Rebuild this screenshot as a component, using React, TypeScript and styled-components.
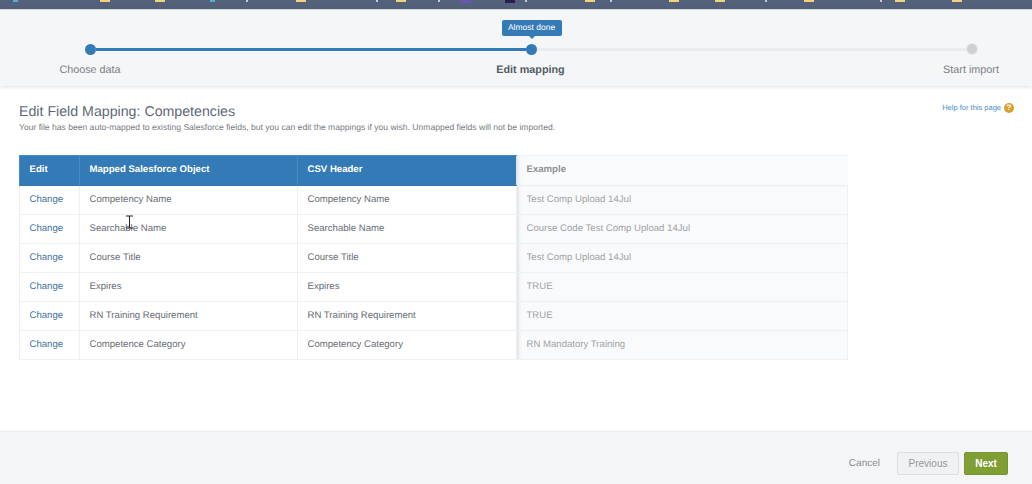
import styled, { createGlobalStyle } from "styled-components";

const GlobalStyle = createGlobalStyle`
  html, body {
    margin: 0;
    padding: 0;
    background: #fff;
    overflow: hidden;
  }
  body {
    font-family: "Liberation Sans", Arial, sans-serif;
    color: #5c6470;
    text-rendering: geometricPrecision;
  }
`;

const Page = styled.div`
  width: 1032px;
  height: 484px;
  display: flex;
  flex-direction: column;
  position: relative;
  overflow: hidden;
`;

/* browser bookmarks bar, only the bottom of the favicons is visible */
const BookmarkBar = styled.div`
  height: 9px;
  flex: none;
  background: #54617a;
  display: flex;
  align-items: flex-start;
`;

const Favicon = styled.span<{ $kind: string; $gap: number }>`
  flex: none;
  margin-left: ${({ $gap }) => $gap}px;
  width: ${({ $kind }) => ($kind === "white" ? 2 : $kind === "blue" ? 5 : 10)}px;
  height: ${({ $kind }) => ($kind === "purple" || $kind === "dark" ? 3 : 2)}px;
  background: ${({ $kind }) =>
    $kind === "folder"
      ? "#f3d27c"
      : $kind === "blue"
      ? "#4fb3d0"
      : $kind === "purple"
      ? "#6a55b5"
      : $kind === "dark"
      ? "#2c1d4f"
      : "#c5cad4"};
`;

const Stepper = styled.div`
  height: 77px;
  flex: none;
  box-sizing: border-box;
  background: #f4f6f8;
  border-top: 1px solid #d5d9de;
  box-shadow: 0 1px 4px rgba(0, 0, 0, 0.13);
  padding-top: 33px;
  position: relative;
  z-index: 1;
`;

const Track = styled.div`
  display: flex;
  align-items: center;
  height: 12px;
  padding: 0 55px 0 85px;
`;

const Dot = styled.span<{ $done?: boolean }>`
  flex: none;
  width: ${({ $done }) => ($done ? 11 : 10)}px;
  height: ${({ $done }) => ($done ? 11 : 10)}px;
  border-radius: 50%;
  background: ${({ $done }) => ($done ? "#337ab7" : "#cfd0d1")};
  box-shadow: ${({ $done }) => ($done ? "none" : "0 0 0 1px #e8e9ea")};
  position: relative;
`;

const Segment = styled.span<{ $done?: boolean }>`
  flex: 1;
  height: 3px;
  background: ${({ $done }) => ($done ? "#337ab7" : "#eaecef")};
`;

const Tooltip = styled.span`
  position: absolute;
  left: 50%;
  bottom: 19px;
  transform: translateX(-50%);
  width: 60px;
  height: 16px;
  border-radius: 2px;
  background: #337ab7;
  color: #fff;
  font-size: 8.5px;
  line-height: 15px;
  text-align: center;
  white-space: nowrap;

  &::after {
    content: "";
    position: absolute;
    left: 50%;
    top: 100%;
    margin-left: -3px;
    border: 3px solid transparent;
    border-bottom-width: 0;
    border-top-color: #337ab7;
  }
`;

const StepLabels = styled.div`
  display: flex;
  justify-content: space-between;
  margin-top: 9px;
  padding: 0 1px 0 30px;
`;

const StepLabel = styled.span<{ $active?: boolean }>`
  width: 120px;
  text-align: center;
  font-size: 10.8px;
  line-height: 12px;
  font-weight: ${({ $active }) => ($active ? 700 : 400)};
  color: ${({ $active }) => ($active ? "#565c66" : "#7b7f85")};
`;

const Content = styled.main`
  flex: 1;
  padding: 16px 19px 0;
  display: flex;
  flex-direction: column;
`;

const TitleRow = styled.div`
  display: flex;
  justify-content: space-between;
  align-items: flex-start;
`;

const Title = styled.h1`
  margin: 1px 0 0;
  font-size: 14.2px;
  line-height: 18px;
  font-weight: 400;
  color: #5f6875;
`;

const HelpLink = styled.a`
  display: flex;
  align-items: center;
  gap: 3px;
  margin: 0 -1px 0 0;
  font-size: 7.5px;
  line-height: 11px;
  color: #4a90c4;
`;

const HelpIcon = styled.span`
  width: 10px;
  height: 10px;
  border-radius: 50%;
  background: #d9a02e;
  color: #fff;
  font-size: 8px;
  font-weight: 700;
  line-height: 10px;
  text-align: center;
`;

const Subtitle = styled.p`
  margin: 0;
  font-size: 8.57px;
  line-height: 12px;
  color: #777c83;
`;

const Table = styled.table`
  margin-top: 22px;
  width: 828px;
  table-layout: fixed;
  border-collapse: collapse;
  font-size: 9.6px;
`;

const HeadCell = styled.th<{ $muted?: boolean }>`
  height: 30px;
  padding: 0 0 3px 9.5px;
  box-sizing: border-box;
  text-align: left;
  font-weight: 700;
  color: ${({ $muted }) => ($muted ? "#8f9296" : "#fff")};
  background: ${({ $muted }) => ($muted ? "#fafbfc" : "#337ab7")};
  border-left: 1px solid ${({ $muted }) => ($muted ? "#e3e5e8" : "#4a8ac2")};
  border-bottom: 1px solid ${({ $muted }) => ($muted ? "#eceef1" : "#337ab7")};
  border-top: 1px solid ${({ $muted }) => ($muted ? "#f1f2f4" : "#4a8ac2")};
  box-shadow: ${({ $muted }) => ($muted ? "inset 4px 0 4px -3px rgba(0,0,0,.12)" : "none")};
`;

const Cell = styled.td<{ $muted?: boolean }>`
  height: 29px;
  padding: 0 0 2px 9.5px;
  box-sizing: border-box;
  color: ${({ $muted }) => ($muted ? "#a0a3a7" : "#696e75")};
  background: ${({ $muted }) => ($muted ? "#f9fafc" : "#fff")};
  border: 1px solid #eef0f2;
  box-shadow: ${({ $muted }) => ($muted ? "inset 4px 0 4px -3px rgba(0,0,0,.14)" : "none")};
`;

const ChangeLink = styled.a`
  color: #3f739f;
`;

const TextCursor = styled.svg`
  position: absolute;
  left: 125px;
  top: 215px;
`;

const Footer = styled.footer`
  height: 53px;
  flex: none;
  box-sizing: border-box;
  background: #f4f5f7;
  border-top: 1px solid #eceef1;
  box-shadow: 0 -1px 3px rgba(0, 0, 0, 0.04);
  display: flex;
  align-items: center;
  justify-content: flex-end;
  gap: 5px;
  padding: 11px 24px 0 0;
`;

const CancelLink = styled.a`
  margin-right: 12px;
  font-size: 10px;
  color: #8b8e92;
`;

const Button = styled.button<{ $primary?: boolean }>`
  height: 23px;
  padding: 0;
  width: ${({ $primary }) => ($primary ? 44 : 62)}px;
  border-radius: 2px;
  font-family: inherit;
  font-size: 10px;
  font-weight: ${({ $primary }) => ($primary ? 700 : 400)};
  color: ${({ $primary }) => ($primary ? "#fff" : "#94979b")};
  background: ${({ $primary }) => ($primary ? "#7f9f35" : "#f0f1f3")};
  border: 1px solid ${({ $primary }) => ($primary ? "#76952f" : "#dcdee1")};
`;

const favicons = [
  { kind: "blue", gap: 13 },
  { kind: "folder", gap: 82 },
  { kind: "folder", gap: 45 },
  { kind: "blue", gap: 45 },
  { kind: "white", gap: 31 },
  { kind: "folder", gap: 48 },
  { kind: "white", gap: 70 },
  { kind: "folder", gap: 18 },
  { kind: "white", gap: 32 },
  { kind: "purple", gap: 21 },
  { kind: "dark", gap: 34 },
  { kind: "white", gap: 10 },
  { kind: "folder", gap: 58 },
  { kind: "white", gap: 15 },
  { kind: "folder", gap: 57 },
  { kind: "folder", gap: 36 },
  { kind: "white", gap: 40 },
  { kind: "folder", gap: 37 },
  { kind: "white", gap: 66 },
  { kind: "folder", gap: 13 },
  { kind: "folder", gap: 47 },
];

const rows = [
  ["Competency Name", "Competency Name", "Test Comp Upload 14Jul"],
  ["Searchable Name", "Searchable Name", "Course Code Test Comp Upload 14Jul"],
  ["Course Title", "Course Title", "Test Comp Upload 14Jul"],
  ["Expires", "Expires", "TRUE"],
  ["RN Training Requirement", "RN Training Requirement", "TRUE"],
  ["Competence Category", "Competency Category", "RN Mandatory Training"],
];

const App = () => {
  return (
    <Page>
      <GlobalStyle />
      <BookmarkBar>
        {favicons.map((icon, i) => (
          <Favicon key={i} $kind={icon.kind} $gap={icon.gap} />
        ))}
      </BookmarkBar>
      <Stepper>
        <Track>
          <Dot $done />
          <Segment $done />
          <Dot $done>
            <Tooltip>Almost done</Tooltip>
          </Dot>
          <Segment />
          <Dot />
        </Track>
        <StepLabels>
          <StepLabel>Choose data</StepLabel>
          <StepLabel $active>Edit mapping</StepLabel>
          <StepLabel>Start import</StepLabel>
        </StepLabels>
      </Stepper>
      <Content>
        <TitleRow>
          <Title>Edit Field Mapping: Competencies</Title>
          <HelpLink>
            Help for this page
            <HelpIcon>?</HelpIcon>
          </HelpLink>
        </TitleRow>
        <Subtitle>
          Your file has been auto-mapped to existing Salesforce fields, but you can edit the
          mappings if you wish. Unmapped fields will not be imported.
        </Subtitle>
        <Table>
          <colgroup>
            <col width={60} />
            <col width={218} />
            <col width={219} />
            <col width={331} />
          </colgroup>
          <thead>
            <tr>
              <HeadCell>Edit</HeadCell>
              <HeadCell>Mapped Salesforce Object</HeadCell>
              <HeadCell>CSV Header</HeadCell>
              <HeadCell $muted>Example</HeadCell>
            </tr>
          </thead>
          <tbody>
            {rows.map((row, i) => (
              <tr key={i}>
                <Cell>
                  <ChangeLink>Change</ChangeLink>
                </Cell>
                <Cell>{row[0]}</Cell>
                <Cell>{row[1]}</Cell>
                <Cell $muted>{row[2]}</Cell>
              </tr>
            ))}
          </tbody>
        </Table>
      </Content>
      <Footer>
        <CancelLink>Cancel</CancelLink>
        <Button>Previous</Button>
        <Button $primary>Next</Button>
      </Footer>
      <TextCursor width="9" height="14" viewBox="0 0 9 14">
        <path d="M1 1h7M4.5 1v12M1 13h7" stroke="#222" strokeWidth="1" fill="none" />
      </TextCursor>
    </Page>
  );
};

export default App;
